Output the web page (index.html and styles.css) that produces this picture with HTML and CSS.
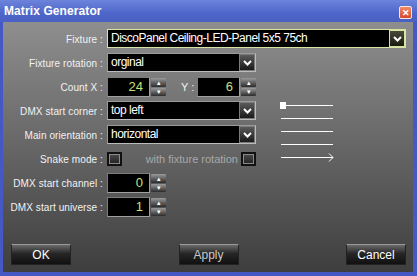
FILE: index.html
```html
<!DOCTYPE html>
<html lang="en">
<head>
    <meta charset="UTF-8">
    <title>Matrix Generator</title>
    <link rel="stylesheet" href="styles.css">
</head>
<body>
    <div class="window">
        <div class="titlebar">
            <span class="title">Matrix Generator</span>
            <span class="close">&#x2715;</span>
        </div>

        <div class="content">
            <div class="form">
                <label class="label">Fixture :</label>
                <div class="select select-wide focused">
                    <span class="select-text">DiscoPanel Ceiling-LED-Panel 5x5 75ch</span>
                    <span class="drop focused-drop"><svg width="9" height="6" viewBox="0 0 9 6"><path d="M1 1 L4.5 4.5 L8 1" fill="none" stroke="#fff" stroke-width="2"/></svg></span>
                </div>

                <label class="label">Fixture rotation :</label>
                <div class="select">
                    <span class="select-text">orginal</span>
                    <span class="drop"><svg width="9" height="6" viewBox="0 0 9 6"><path d="M1 1 L4.5 4.5 L8 1" fill="none" stroke="#fff" stroke-width="2"/></svg></span>
                </div>
                <div></div>

                <label class="label">Count X :</label>
                <div class="pair">
                    <div class="spin">
                        <span class="spin-value">24</span>
                        <span class="spin-btns"><span class="sb">&#x25B4;</span><span class="sb">&#x25BE;</span></span>
                    </div>
                    <span class="y-label">Y :</span>
                    <div class="spin">
                        <span class="spin-value">6</span>
                        <span class="spin-btns"><span class="sb">&#x25B4;</span><span class="sb">&#x25BE;</span></span>
                    </div>
                </div>
                <div></div>

                <label class="label">DMX start corner :</label>
                <div class="select">
                    <span class="select-text">top left</span>
                    <span class="drop"><svg width="9" height="6" viewBox="0 0 9 6"><path d="M1 1 L4.5 4.5 L8 1" fill="none" stroke="#fff" stroke-width="2"/></svg></span>
                </div>
                <div class="preview">
                    <svg width="56" height="60" viewBox="0 0 56 60">
                        <rect x="0" y="0" width="6" height="7" fill="#fff"/>
                        <path d="M5 3.5 H53 M1 16.5 H53 M1 29.5 H53 M1 42.5 H53 M1 55.5 H53" stroke="#fff" stroke-width="1"/>
                        <path d="M49 51.5 L53 55.5 L49 59.5" fill="none" stroke="#fff" stroke-width="1"/>
                    </svg>
                </div>

                <label class="label">Main orientation :</label>
                <div class="select">
                    <span class="select-text">horizontal</span>
                    <span class="drop"><svg width="9" height="6" viewBox="0 0 9 6"><path d="M1 1 L4.5 4.5 L8 1" fill="none" stroke="#fff" stroke-width="2"/></svg></span>
                </div>

                <label class="label">Snake mode :</label>
                <div class="snake">
                    <span class="check"></span>
                    <span class="snake-right">
                        <span class="disabled">with fixture rotation</span>
                        <span class="check"></span>
                    </span>
                </div>

                <label class="label">DMX start channel :</label>
                <div class="pair">
                    <div class="spin">
                        <span class="spin-value">0</span>
                        <span class="spin-btns"><span class="sb">&#x25B4;</span><span class="sb">&#x25BE;</span></span>
                    </div>
                </div>
                <div></div>

                <label class="label">DMX start universe :</label>
                <div class="pair">
                    <div class="spin">
                        <span class="spin-value">1</span>
                        <span class="spin-btns"><span class="sb">&#x25B4;</span><span class="sb">&#x25BE;</span></span>
                    </div>
                </div>
                <div></div>
            </div>

            <div class="buttons">
                <button class="btn">OK</button>
                <button class="btn btn-dim">Apply</button>
                <button class="btn">Cancel</button>
            </div>
        </div>
    </div>
</body>
</html>
```

FILE: styles.css
```css
* {
    margin: 0;
    padding: 0;
    box-sizing: border-box;
}

body {
    width: 417px;
    height: 276px;
    font-family: 'Liberation Sans', Arial, sans-serif;
    font-size: 10px;
    color: #f2f2f2;
    background: #4a5cc8;
}

.window {
    width: 417px;
    height: 276px;
    display: flex;
    flex-direction: column;
    background: #4558c4;
}

.titlebar {
    height: 22px;
    display: flex;
    align-items: center;
    justify-content: space-between;
    padding: 0 5px 0 4px;
    background: linear-gradient(to bottom, #6d84dc, #4e66c9 60%, #4a60c2);
}

.title {
    font-weight: bold;
    font-size: 12px;
    color: #fff;
    letter-spacing: 0.1px;
}

.close {
    width: 13px;
    height: 13px;
    margin-top: 3px;
    display: flex;
    align-items: center;
    justify-content: center;
    font-size: 9px;
    font-weight: bold;
    color: #fff;
    background: linear-gradient(to bottom, #f08a68, #d5482a);
    border: 1px solid #f4e8e0;
    border-radius: 2px;
}

.content {
    flex: 1;
    margin: 0 4px 4px 3px;
    display: flex;
    flex-direction: column;
    justify-content: space-between;
    padding: 7px 7px 7px 0;
    background: linear-gradient(to bottom, #8e8e8e, #6a6a6a 45%, #3e3e3e);
}

.form {
    display: grid;
    grid-template-columns: 100px 149px 1fr;
    grid-auto-rows: 20px;
    column-gap: 4px;
    row-gap: 4px;
}

.label {
    display: flex;
    align-items: center;
    justify-content: flex-end;
    white-space: nowrap;
    letter-spacing: 0.1px;
}

.select {
    display: flex;
    align-items: stretch;
    height: 19px;
    background: #000;
    border: 1px solid #9a9a9a;
    border-right-color: #bcbcbc;
    border-bottom-color: #bcbcbc;
}

.select-wide {
    grid-column: 2 / 4;
}

.focused {
    border-color: #d6e6a2;
}

.select-text {
    flex: 1;
    padding-left: 3px;
    font-size: 12px;
    letter-spacing: -0.5px;
    line-height: 17px;
    color: #fff;
    white-space: nowrap;
    overflow: hidden;
}

.drop {
    width: 16px;
    display: flex;
    align-items: center;
    justify-content: center;
    background: linear-gradient(to bottom, #5a5a5a, #1a1a1a);
    border: 1px solid #7a7a7a;
}

.focused-drop {
    border-color: #d6e6a2;
    background: linear-gradient(to bottom, #4a4a3a, #1a1a10);
}

.pair {
    display: flex;
    align-items: center;
}

.spin {
    display: flex;
    height: 20px;
}

.spin-value {
    width: 43px;
    padding-right: 6px;
    text-align: right;
    font-size: 13px;
    line-height: 18px;
    color: #c6e07a;
    background: #000;
    border: 1px solid #7c7c7c;
    border-right-color: #a0a0a0;
    border-bottom-color: #a0a0a0;
}

.spin-btns {
    width: 16px;
    display: flex;
    flex-direction: column;
    gap: 1px;
    padding: 1px 0 1px 1px;
}

.sb {
    flex: 1;
    display: flex;
    align-items: center;
    justify-content: center;
    font-size: 7px;
    line-height: 1;
    color: #fff;
    background: linear-gradient(to bottom, #9a9a9a, #2c2c2c);
    border-radius: 1px;
}

.y-label {
    width: 33px;
    padding-left: 15px;
    font-size: 11px;
}

.snake {
    display: flex;
    align-items: center;
    justify-content: space-between;
}

.snake-right {
    display: flex;
    align-items: center;
    gap: 3px;
}

.disabled {
    font-size: 11px;
    color: #a8a8a8;
}

.check {
    width: 15px;
    height: 14px;
    background: linear-gradient(to bottom, #4a4a4a, #222);
    border: 2px solid #111;
    box-shadow: inset 0 0 0 1px #8a8a8a;
}

.preview {
    grid-row: span 3;
    padding: 1px 0 0 20px;
}

.buttons {
    display: flex;
    justify-content: space-between;
    padding-left: 8px;
}

.btn {
    width: 60px;
    height: 21px;
    font-family: 'Liberation Sans', Arial, sans-serif;
    font-size: 12px;
    color: #fff;
    background: linear-gradient(to bottom, #6a6a6a, #262626 45%, #111);
    border: 1px solid #222;
    border-top-color: #9a9a9a;
}

.btn-dim {
    color: #c8c8c8;
}
```
